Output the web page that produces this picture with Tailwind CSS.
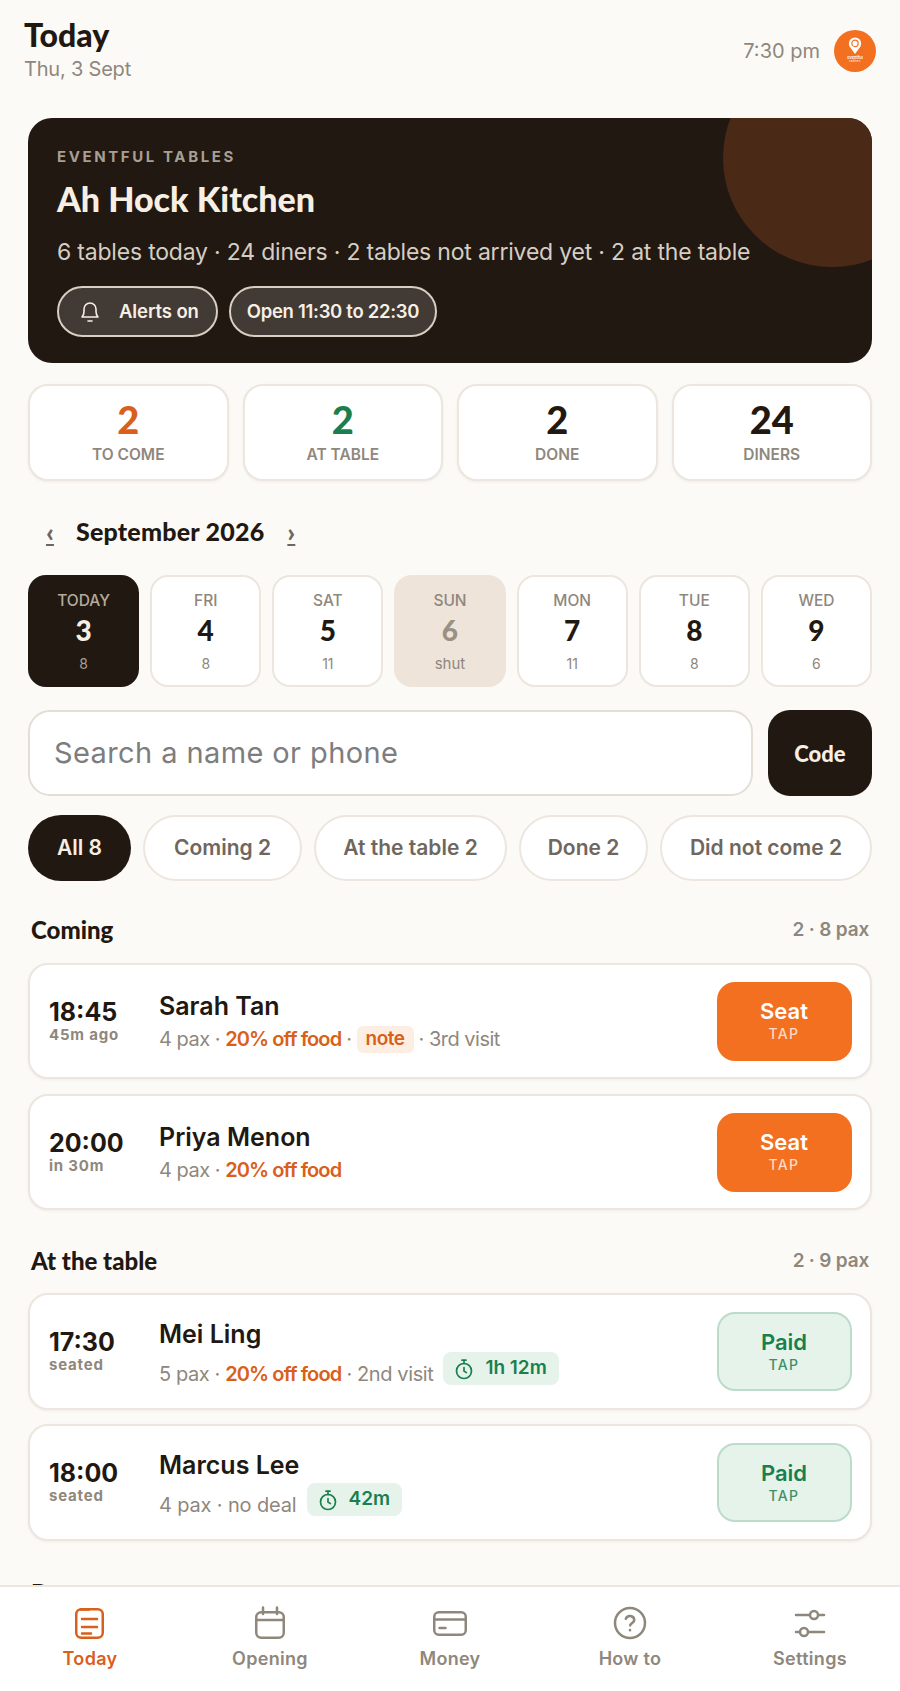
<!doctype html>
<html lang="en">
<head>
<meta charset="utf-8">
<title>Today</title>
<script src="https://cdn.jsdelivr.net/npm/@tailwindcss/browser@4"></script>
</head>
<body class="bg-[#fcfaf7] font-['Inter',sans-serif] text-[#211811]">
<div class="relative h-[1691px] w-[900px] overflow-hidden">
  <header class="flex h-[118px] items-start justify-between pl-[24px] pr-[24px]">
    <div class="pt-[17px]">
      <h1 class="font-['Lato',sans-serif] text-[32px] leading-[36px] font-black">Today</h1>
      <p class="mt-[3px] text-[20px] leading-[26px] tracking-[-0.2px] text-[#8f877c]">Thu, 3 Sept</p>
    </div>
    <div class="flex items-center gap-[14px] pt-[30px]">
      <span class="text-[20px] text-[#8f877c]">7:30 pm</span>
      <div class="flex h-[42px] w-[42px] flex-col items-center justify-center rounded-full bg-[#f37021] text-white">
        <svg width="14" height="18" viewBox="0 0 16 20" class="-mt-[2px]"><path d="M8 19 L2.6 11.6 A7 7 0 1 1 13.4 11.6 Z" fill="#fff"/><circle cx="8" cy="7" r="3.6" fill="none" stroke="#f37021" stroke-width="1.4"/></svg>
        <span class="mt-[1px] text-[4px] leading-[4px] font-semibold">eventful</span>
        <span class="text-[3px] leading-[3px] tracking-[0.5px]">tables</span>
      </div>
    </div>
  </header>

  <main class="px-[28px]">
    <section class="relative h-[245px] overflow-hidden rounded-[24px] bg-[#211811] pl-[29px] pt-[29px]">
      <div class="absolute -right-[69px] -top-[69px] h-[218px] w-[218px] rounded-full bg-[#4a2a16]"></div>
      <div class="relative">
        <p class="text-[15px] leading-[20px] font-bold tracking-[2.6px] text-[#a89f92]">EVENTFUL TABLES</p>
        <h2 class="mt-[10px] font-['Lato',sans-serif] text-[34px] leading-[44px] font-black text-[#f7efe4]">Ah Hock Kitchen</h2>
        <p class="mt-[16px] text-[23px] leading-[30px] tracking-[-0.2px] text-[#d6cec3]">6 tables today · 24 diners · 2 tables not arrived yet · 2 at the table</p>
        <div class="mt-[19px] flex gap-[11px]">
          <div class="flex h-[51px] w-[161px] items-center gap-[18px] rounded-full border-2 border-[#d8cfc2] bg-white/15 pl-[20px]">
            <svg width="22" height="26" viewBox="0 0 22 26" fill="none" stroke="#f7efe4" stroke-width="1.6" stroke-linecap="round" stroke-linejoin="round"><path d="M3 18c1.6-1.6 2-3 2-5.5V10a6 6 0 0 1 12 0v2.5c0 2.5.4 3.9 2 5.5Z"/><path d="M9 22h4"/></svg>
            <span class="text-[18.5px] font-semibold tracking-[-0.1px] text-[#f7efe4]">Alerts on</span>
          </div>
          <div class="flex h-[51px] w-[208px] items-center justify-center rounded-full border-2 border-[#d8cfc2] bg-white/15">
            <span class="text-[18.5px] font-semibold tracking-[-0.3px] text-[#f7efe4]">Open 11:30 to 22:30</span>
          </div>
        </div>
      </div>
    </section>

    <section class="mt-[21px] grid grid-cols-4 gap-[14px]">
      <div class="flex h-[97px] flex-col items-center rounded-[20px] border-2 border-[#ece6de] bg-white pt-[13px] shadow-[0_1px_3px_rgba(33,24,17,0.06)]">
        <span class="font-['Lato',sans-serif] text-[38px] leading-[40px] font-black text-[#d9601a]">2</span>
        <span class="mt-[6px] text-[15.5px] leading-[20px] font-semibold text-[#8f877c]">TO COME</span>
      </div>
      <div class="flex h-[97px] flex-col items-center rounded-[20px] border-2 border-[#ece6de] bg-white pt-[13px] shadow-[0_1px_3px_rgba(33,24,17,0.06)]">
        <span class="font-['Lato',sans-serif] text-[38px] leading-[40px] font-black text-[#1a7f4e]">2</span>
        <span class="mt-[6px] text-[15.5px] leading-[20px] font-semibold text-[#8f877c]">AT TABLE</span>
      </div>
      <div class="flex h-[97px] flex-col items-center rounded-[20px] border-2 border-[#ece6de] bg-white pt-[13px] shadow-[0_1px_3px_rgba(33,24,17,0.06)]">
        <span class="font-['Lato',sans-serif] text-[38px] leading-[40px] font-black">2</span>
        <span class="mt-[6px] text-[15.5px] leading-[20px] font-semibold text-[#8f877c]">DONE</span>
      </div>
      <div class="flex h-[97px] flex-col items-center rounded-[20px] border-2 border-[#ece6de] bg-white pt-[13px] shadow-[0_1px_3px_rgba(33,24,17,0.06)]">
        <span class="font-['Lato',sans-serif] text-[38px] leading-[40px] font-black">24</span>
        <span class="mt-[6px] text-[15.5px] leading-[20px] font-semibold text-[#8f877c]">DINERS</span>
      </div>
    </section>

    <section class="flex h-[94px] items-center pt-[8px]">
      <span class="ml-[18px] font-['Lato',sans-serif] text-[27px] leading-[24px] font-black text-[#6f675e] underline">‹</span>
      <span class="ml-[22px] font-['Lato',sans-serif] text-[25px] font-black tracking-[0.2px]">September 2026</span>
      <span class="ml-[23px] font-['Lato',sans-serif] text-[27px] leading-[24px] font-black text-[#6f675e] underline">›</span>
    </section>

    <section class="grid grid-cols-7 gap-[11px]">
      <div class="flex h-[112px] flex-col items-center rounded-[18px] bg-[#211811] pt-[15px]">
        <span class="text-[15.5px] leading-[22px] font-medium text-[#b5ab9d]">TODAY</span>
        <span class="font-['Lato',sans-serif] text-[28px] leading-[37px] font-black text-[#f7efe4]">3</span>
        <span class="mt-[5px] text-[14px] leading-[20px] text-[#a89f92]">8</span>
      </div>
      <div class="flex h-[112px] flex-col items-center rounded-[18px] border-2 border-[#ece6de] bg-white pt-[13px]">
        <span class="text-[15.5px] leading-[22px] font-medium text-[#8f877c]">FRI</span>
        <span class="font-['Lato',sans-serif] text-[28px] leading-[37px] font-black">4</span>
        <span class="mt-[5px] text-[14px] leading-[20px] text-[#8f877c]">8</span>
      </div>
      <div class="flex h-[112px] flex-col items-center rounded-[18px] border-2 border-[#ece6de] bg-white pt-[13px]">
        <span class="text-[15.5px] leading-[22px] font-medium text-[#8f877c]">SAT</span>
        <span class="font-['Lato',sans-serif] text-[28px] leading-[37px] font-black">5</span>
        <span class="mt-[5px] text-[14px] leading-[20px] text-[#8f877c]">11</span>
      </div>
      <div class="flex h-[112px] flex-col items-center rounded-[18px] bg-[#eee4da] pt-[15px]">
        <span class="text-[15.5px] leading-[22px] font-medium text-[#8f877c]">SUN</span>
        <span class="font-['Lato',sans-serif] text-[28px] leading-[37px] font-black text-[#9a9185]">6</span>
        <span class="mt-[5px] text-[15px] leading-[20px] text-[#8f877c]">shut</span>
      </div>
      <div class="flex h-[112px] flex-col items-center rounded-[18px] border-2 border-[#ece6de] bg-white pt-[13px]">
        <span class="text-[15.5px] leading-[22px] font-medium text-[#8f877c]">MON</span>
        <span class="font-['Lato',sans-serif] text-[28px] leading-[37px] font-black">7</span>
        <span class="mt-[5px] text-[14px] leading-[20px] text-[#8f877c]">11</span>
      </div>
      <div class="flex h-[112px] flex-col items-center rounded-[18px] border-2 border-[#ece6de] bg-white pt-[13px]">
        <span class="text-[15.5px] leading-[22px] font-medium text-[#8f877c]">TUE</span>
        <span class="font-['Lato',sans-serif] text-[28px] leading-[37px] font-black">8</span>
        <span class="mt-[5px] text-[14px] leading-[20px] text-[#8f877c]">8</span>
      </div>
      <div class="flex h-[112px] flex-col items-center rounded-[18px] border-2 border-[#ece6de] bg-white pt-[13px]">
        <span class="text-[15.5px] leading-[22px] font-medium text-[#8f877c]">WED</span>
        <span class="font-['Lato',sans-serif] text-[28px] leading-[37px] font-black">9</span>
        <span class="mt-[5px] text-[14px] leading-[20px] text-[#8f877c]">6</span>
      </div>
    </section>

    <section class="mt-[23px] flex gap-[15px]">
      <div class="flex h-[86px] w-[725px] items-center rounded-[22px] border-2 border-[#e4ded5] bg-white pl-[24px] text-[29px] tracking-[0.4px] text-[#7d7d7d]">Search a name or phone</div>
      <div class="flex h-[86px] w-[104px] items-center justify-center rounded-[22px] bg-[#211811] font-['Lato',sans-serif] text-[22px] font-black text-[#f7efe4]">Code</div>
    </section>

    <section class="mt-[19px] flex gap-[12px] text-[21px] font-semibold text-[#6f675e]">
      <div class="flex h-[66px] w-[103px] items-center justify-center rounded-full bg-[#211811] text-[#f7efe4]">All 8</div>
      <div class="flex h-[66px] w-[159px] items-center justify-center rounded-full border-2 border-[#ece6de] bg-white">Coming 2</div>
      <div class="flex h-[66px] w-[193px] items-center justify-center rounded-full border-2 border-[#ece6de] bg-white">At the table 2</div>
      <div class="flex h-[66px] w-[129px] items-center justify-center rounded-full border-2 border-[#ece6de] bg-white">Done 2</div>
      <div class="flex h-[66px] w-[212px] items-center justify-center rounded-full border-2 border-[#ece6de] bg-white">Did not come 2</div>
    </section>

    <section class="mt-[33px]">
      <div class="flex h-[32px] items-center justify-between pl-[3px] pr-[3px]">
        <h3 class="font-['Lato',sans-serif] text-[24px] font-black">Coming</h3>
        <span class="text-[19px] font-semibold tracking-[-0.2px] text-[#8f877c]">2 · 8 pax</span>
      </div>
      <div class="mt-[17px] flex h-[116px] items-center rounded-[20px] border-2 border-[#ece6de] bg-white pl-[19px] pr-[18.5px] shadow-[0_1px_3px_rgba(33,24,17,0.06)]">
        <div class="w-[110px]">
          <p class="text-[25px] leading-[26px] font-bold">18:45</p>
          <p class="mt-[1px] text-[15px] leading-[18px] font-bold tracking-[0.8px] text-[#8f877c]">45m ago</p>
        </div>
        <div class="flex-1 pt-[3px]">
          <p class="text-[25px] leading-[30px] font-semibold">Sarah Tan</p>
          <div class="mt-[3px] flex h-[30px] items-center text-[20px] tracking-[-0.5px] text-[#8f877c]">4 pax ·&nbsp;<b class="font-semibold tracking-[-0.9px] text-[#d9601a]">20% off food</b>&nbsp;·<span class="mx-[5px] flex h-[27px] items-center rounded-[6px] bg-[#fdeee3] px-[9px] text-[19px] font-semibold text-[#d9601a]">note</span>· 3rd visit</div>
        </div>
        <div class="flex h-[79px] w-[135px] flex-col items-center justify-center rounded-[18px] bg-[#f37021] text-white">
          <span class="text-[22px] leading-[26px] font-semibold">Seat</span>
          <span class="text-[14px] leading-[20px] font-medium tracking-[1.4px] text-white/75">TAP</span>
        </div>
      </div>
      <div class="mt-[15px] flex h-[116px] items-center rounded-[20px] border-2 border-[#ece6de] bg-white pl-[19px] pr-[18.5px] shadow-[0_1px_3px_rgba(33,24,17,0.06)]">
        <div class="w-[110px]">
          <p class="text-[25px] leading-[26px] font-bold">20:00</p>
          <p class="mt-[1px] text-[15px] leading-[18px] font-bold tracking-[0.8px] text-[#8f877c]">in 30m</p>
        </div>
        <div class="flex-1 pt-[2px]">
          <p class="text-[25px] leading-[30px] font-semibold">Priya Menon</p>
          <div class="mt-[3px] flex h-[30px] items-center text-[20px] tracking-[-0.5px] text-[#8f877c]">4 pax ·&nbsp;<b class="font-semibold tracking-[-0.9px] text-[#d9601a]">20% off food</b></div>
        </div>
        <div class="flex h-[79px] w-[135px] flex-col items-center justify-center rounded-[18px] bg-[#f37021] text-white">
          <span class="text-[22px] leading-[26px] font-semibold">Seat</span>
          <span class="text-[14px] leading-[20px] font-medium tracking-[1.4px] text-white/75">TAP</span>
        </div>
      </div>
    </section>

    <section class="mt-[35px]">
      <div class="flex h-[32px] items-center justify-between pl-[3px] pr-[3px]">
        <h3 class="font-['Lato',sans-serif] text-[24px] font-black">At the table</h3>
        <span class="text-[19px] font-semibold tracking-[-0.2px] text-[#8f877c]">2 · 9 pax</span>
      </div>
      <div class="mt-[16px] flex h-[117px] items-center rounded-[20px] border-2 border-[#ece6de] bg-white pl-[19px] pr-[18.5px] shadow-[0_1px_3px_rgba(33,24,17,0.06)]">
        <div class="w-[110px]">
          <p class="text-[25px] leading-[26px] font-bold">17:30</p>
          <p class="mt-[1px] text-[15px] leading-[18px] font-bold tracking-[0.8px] text-[#8f877c]">seated</p>
        </div>
        <div class="flex-1 pt-[1px]">
          <p class="text-[25px] leading-[30px] font-semibold">Mei Ling</p>
          <div class="mt-[3px] flex h-[34px] items-center text-[20px] tracking-[-0.4px] text-[#8f877c]"><span class="pt-[10px]">5 pax ·&nbsp;<b class="font-semibold tracking-[-0.9px] text-[#d9601a]">20% off food</b>&nbsp;· 2nd visit</span>
            <span class="ml-[10px] flex h-[33px] items-center gap-[12px] rounded-[8px] bg-[#e6f3ea] px-[12px] text-[19px] font-semibold tracking-normal text-[#1a7f4e]">
              <svg width="18" height="22" viewBox="0 0 18 22" fill="none" stroke="#1a7f4e" stroke-width="1.7" stroke-linecap="round"><circle cx="9" cy="13" r="7.5"/><path d="M7 2.2h4M9 2.2V5.4M9 9.5V13l2.4 1.6"/></svg>1h 12m</span>
          </div>
        </div>
        <div class="flex h-[79px] w-[135px] flex-col items-center justify-center rounded-[18px] border-2 border-[#bcdcc9] bg-[#e6f3ea]">
          <span class="text-[22px] leading-[26px] font-semibold text-[#1a7f4e]">Paid</span>
          <span class="text-[14px] leading-[20px] font-medium tracking-[1.4px] text-[#3f8f68]">TAP</span>
        </div>
      </div>
      <div class="mt-[14px] flex h-[117px] items-center rounded-[20px] border-2 border-[#ece6de] bg-white pl-[19px] pr-[18.5px] shadow-[0_1px_3px_rgba(33,24,17,0.06)]">
        <div class="w-[110px]">
          <p class="text-[25px] leading-[26px] font-bold">18:00</p>
          <p class="mt-[1px] text-[15px] leading-[18px] font-bold tracking-[0.8px] text-[#8f877c]">seated</p>
        </div>
        <div class="flex-1 pt-[1px]">
          <p class="text-[25px] leading-[30px] font-semibold">Marcus Lee</p>
          <div class="mt-[3px] flex h-[34px] items-center text-[20px] tracking-[-0.15px] text-[#8f877c]"><span class="pt-[10px]">4 pax · no deal</span>
            <span class="ml-[10px] flex h-[33px] items-center gap-[12px] rounded-[8px] bg-[#e6f3ea] px-[12px] text-[19px] font-semibold tracking-normal text-[#1a7f4e]">
              <svg width="18" height="22" viewBox="0 0 18 22" fill="none" stroke="#1a7f4e" stroke-width="1.7" stroke-linecap="round"><circle cx="9" cy="13" r="7.5"/><path d="M7 2.2h4M9 2.2V5.4M9 9.5V13l2.4 1.6"/></svg>42m</span>
          </div>
        </div>
        <div class="flex h-[79px] w-[135px] flex-col items-center justify-center rounded-[18px] border-2 border-[#bcdcc9] bg-[#e6f3ea]">
          <span class="text-[22px] leading-[26px] font-semibold text-[#1a7f4e]">Paid</span>
          <span class="text-[14px] leading-[20px] font-medium tracking-[1.4px] text-[#3f8f68]">TAP</span>
        </div>
      </div>
    </section>

    <section class="mt-[36px] pl-[3px]">
      <h3 class="font-['Lato',sans-serif] text-[24px] leading-[32px] font-black">Done</h3>
    </section>
  </main>

  <nav class="absolute inset-x-0 bottom-0 grid h-[106px] grid-cols-5 border-t-2 border-[#ece6de] bg-white pt-[16px] text-[18px] font-semibold tracking-[0.3px] text-[#8f877c]">
    <div class="flex flex-col items-center text-[#d9601a]">
      <svg width="40" height="40" viewBox="0 0 40 40" fill="none" stroke="#d9601a" stroke-width="2.5" stroke-linecap="round" stroke-linejoin="round"><rect x="6.25" y="6.25" width="26.5" height="28.5" rx="5"/><path d="M11 6.5h8M12 16h15M12 24h15M12 30.5h9"/></svg>
      <span class="mt-[4px] leading-[24px]">Today</span>
    </div>
    <div class="flex flex-col items-center">
      <svg width="40" height="40" viewBox="0 0 40 40" fill="none" stroke="#8f877c" stroke-width="2.5" stroke-linecap="round" stroke-linejoin="round"><rect x="6.25" y="9.25" width="27.5" height="25.5" rx="5"/><path d="M6.5 17h27M13 4.5v6.5M27 4.5v6.5"/></svg>
      <span class="mt-[4px] leading-[24px]">Opening</span>
    </div>
    <div class="flex flex-col items-center">
      <svg width="40" height="40" viewBox="0 0 40 40" fill="none" stroke="#8f877c" stroke-width="2.5" stroke-linecap="round" stroke-linejoin="round"><rect x="4.25" y="9.25" width="31.5" height="22.5" rx="4.5"/><path d="M4.5 16.5h31M9.5 25h6"/></svg>
      <span class="mt-[4px] leading-[24px]">Money</span>
    </div>
    <div class="flex flex-col items-center">
      <svg width="40" height="40" viewBox="0 0 40 40" fill="none" stroke="#8f877c" stroke-width="2.5" stroke-linecap="round" stroke-linejoin="round"><circle cx="20" cy="20" r="15"/><path d="M15.8 15.8a4.4 4.4 0 0 1 8.5 1.2c0 2.6-3.6 3-4.2 5.4"/><path d="M20 27v.2"/></svg>
      <span class="mt-[4px] leading-[24px]">How to</span>
    </div>
    <div class="flex flex-col items-center">
      <svg width="40" height="40" viewBox="0 0 40 40" fill="none" stroke="#8f877c" stroke-width="2.5" stroke-linecap="round"><path d="M6 12h14M29 12h5M6 29h3M18 29h16"/><circle cx="24" cy="12" r="4"/><circle cx="14" cy="29" r="4"/></svg>
      <span class="mt-[4px] leading-[24px]">Settings</span>
    </div>
  </nav>
</div>
</body>
</html>
